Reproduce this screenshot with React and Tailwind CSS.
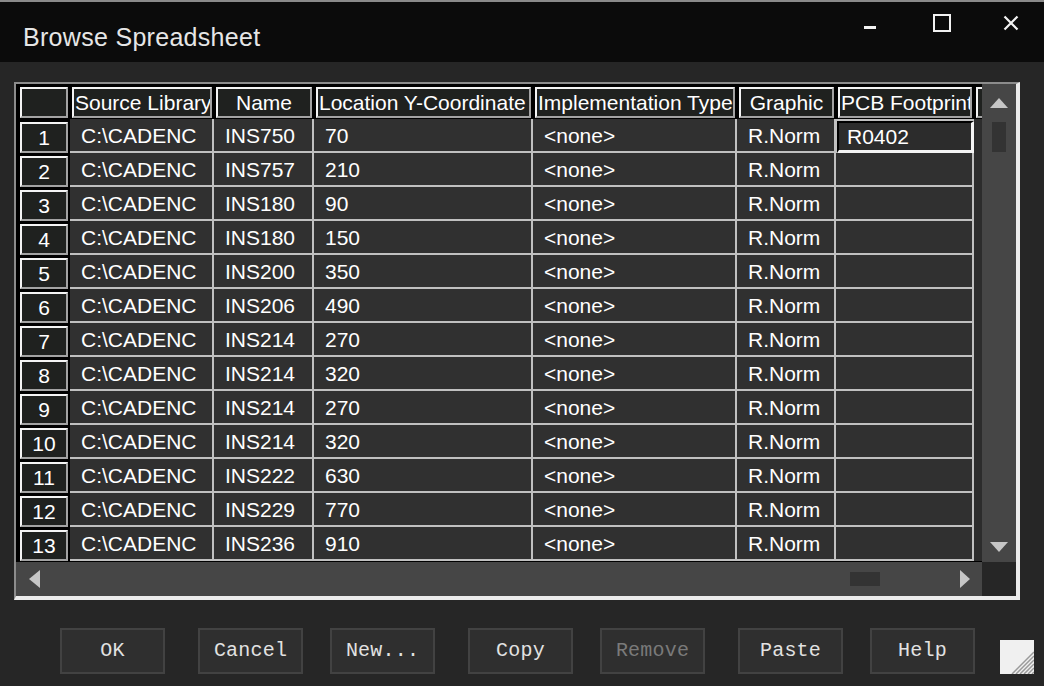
import React from 'react';

const cols = [
  { header: 'Source Library', cell: 'w-[144px]', center: false },
  { header: 'Name', cell: 'w-[100px]', center: true },
  { header: 'Location Y-Coordinate', cell: 'w-[219px]', center: false },
  { header: 'Implementation Type', cell: 'w-[204px]', center: false },
  { header: 'Graphic', cell: 'w-[99px]', center: true },
  { header: 'PCB Footprint', cell: 'w-[138px]', center: false },
];

const rows = [
  ['INS750', '70', 'R0402'],
  ['INS757', '210', ''],
  ['INS180', '90', ''],
  ['INS180', '150', ''],
  ['INS200', '350', ''],
  ['INS206', '490', ''],
  ['INS214', '270', ''],
  ['INS214', '320', ''],
  ['INS214', '270', ''],
  ['INS214', '320', ''],
  ['INS222', '630', ''],
  ['INS229', '770', ''],
  ['INS236', '910', ''],
];

const buttons = [
  { label: 'OK', extra: '' },
  { label: 'Cancel', extra: 'ml-[6px]' },
  { label: 'New...', extra: '' },
  { label: 'Copy', extra: 'ml-[6px]' },
  { label: 'Remove', extra: '', disabled: true },
  { label: 'Paste', extra: 'ml-[6px]' },
  { label: 'Help', extra: '' },
];

function Box({ children, className = '' }) {
  // raised 3d box used for the header and row-number cells
  return (
    <div
      className={
        'h-[31px] bg-[#1f211f] border-t-2 border-l-2 border-t-[#f4f4f4] border-l-[#f4f4f4] border-r-2 border-b-2 border-r-[#a3a3a3] border-b-[#a3a3a3] flex items-center overflow-hidden whitespace-nowrap ' +
        className
      }
    >
      {children}
    </div>
  );
}

function Cell({ className = '', children }) {
  return (
    <div
      className={
        'h-[34px] shrink-0 bg-[#303030] border-r-2 border-b-2 border-[#c0c0c0] flex items-center pl-[11px] whitespace-nowrap overflow-hidden ' +
        className
      }
    >
      {children}
    </div>
  );
}

export default function App() {
  return (
    <div
      className="w-[1044px] h-[686px] bg-[#262626] flex flex-col overflow-hidden text-white"
      style={{ fontFamily: '"Liberation Sans", Arial, sans-serif' }}
    >
      {/* title bar */}
      <div className="h-[62px] shrink-0 border-t-2 border-[#8a8a8a] bg-[#0b0b0b] flex">
        <div className="pl-[23px] pt-[11px] flex items-center text-[25px] tracking-[0.3px] text-[#e6e6e6]">
          Browse Spreadsheet
        </div>
        <div className="ml-auto flex h-[42px]">
          <div className="w-[73px] flex items-center justify-center">
            <svg width="18" height="18" viewBox="0 0 18 18">
              <rect x="3" y="12" width="12" height="3" fill="#f2f2f2" />
            </svg>
          </div>
          <div className="w-[72px] flex items-center justify-center">
            <svg width="18" height="18" viewBox="0 0 18 18">
              <rect x="1" y="1" width="16" height="16" fill="none" stroke="#f2f2f2" strokeWidth="2" />
            </svg>
          </div>
          <div className="w-[66px] flex items-center justify-center">
            <svg width="16" height="16" viewBox="0 0 16 16">
              <path d="M1.5 1.5 L14.5 14.5 M14.5 1.5 L1.5 14.5" stroke="#f2f2f2" strokeWidth="2.2" />
            </svg>
          </div>
        </div>
      </div>

      {/* spreadsheet frame */}
      <div className="mt-[20px] ml-[14px] w-[1006px] h-[518px] shrink-0 border-t-2 border-l-2 border-t-[#8c8c8c] border-l-[#8c8c8c] border-r-4 border-b-4 border-r-[#ececec] border-b-[#ececec] flex flex-col">
        <div className="h-[478px] flex">
          <div className="w-[966px] h-[478px] bg-black overflow-hidden text-[21px] leading-none">
            {/* header row */}
            <div className="h-[35px] flex">
              <div className="w-[54px] shrink-0 pl-[4px] pt-[3px]">
                <Box className="w-[48px]" />
              </div>
              {cols.map((c) => (
                <div key={c.header} className={'shrink-0 px-[2px] pt-[3px] ' + c.cell}>
                  <Box className={c.center ? 'justify-center' : 'pl-[1px]'}>{c.header}</Box>
                </div>
              ))}
              <div className="flex-1 pl-[2px] pt-[3px] overflow-hidden">
                <Box className="w-[40px]" />
              </div>
            </div>
            {/* data rows */}
            {rows.map((r, i) => (
              <div key={i} className="h-[34px] flex">
                <div className="w-[54px] shrink-0 pl-[4px] pt-[3px]">
                  <Box className="w-[48px] h-[30px] justify-center">{i + 1}</Box>
                </div>
                <Cell className="w-[144px]">C:\CADENC</Cell>
                <Cell className="w-[100px]">{r[0]}</Cell>
                <Cell className="w-[219px]">{r[1]}</Cell>
                <Cell className="w-[204px]">&lt;none&gt;</Cell>
                <Cell className="w-[99px]">R.Norm</Cell>
                {i === 0 ? (
                  <div className="w-[138px] h-[34px] shrink-0 bg-[#c0c0c0] pl-px pt-[2px]">
                    <div className="h-[32px] bg-[#2c2c2c] border-t-2 border-l-2 border-black border-r-[3px] border-b-[3px] border-r-[#f4f4f4] border-b-[#f4f4f4] flex items-center pl-[8px]">
                      {r[2]}
                    </div>
                  </div>
                ) : (
                  <Cell className="w-[138px]">{r[2]}</Cell>
                )}
                <div className="flex-1 h-[34px] bg-[#2c2c2c]" />
              </div>
            ))}
          </div>
          {/* vertical scrollbar */}
          <div className="w-[34px] h-[478px] bg-[#464646] flex flex-col items-center pt-[14px] pb-[10px]">
            <svg width="18" height="10" viewBox="0 0 18 10">
              <path d="M9 0 L18 10 L0 10 Z" fill="#c6c6c6" />
            </svg>
            <div className="mt-[14px] w-[14px] h-[30px] bg-[#333333]" />
            <div className="flex-1" />
            <svg width="18" height="10" viewBox="0 0 18 10">
              <path d="M0 0 L18 0 L9 10 Z" fill="#c6c6c6" />
            </svg>
          </div>
        </div>
        <div className="h-[34px] flex">
          {/* horizontal scrollbar */}
          <div className="w-[966px] h-[34px] bg-[#464646] flex items-center pl-[13px] pr-[12px]">
            <svg width="11" height="18" viewBox="0 0 11 18">
              <path d="M11 0 L11 18 L0 9 Z" fill="#c6c6c6" />
            </svg>
            <div className="flex-1" />
            <div className="w-[30px] h-[14px] bg-[#333333]" />
            <div className="w-[80px]" />
            <svg width="10" height="18" viewBox="0 0 10 18">
              <path d="M0 0 L10 9 L0 18 Z" fill="#c6c6c6" />
            </svg>
          </div>
          <div className="w-[34px] h-[34px] bg-[#262626]" />
        </div>
      </div>

      {/* buttons */}
      <div
        className="mt-[28px] h-[46px] pl-[60px] flex gap-[27px]"
        style={{ fontFamily: '"Liberation Mono", "Courier New", monospace' }}
      >
        {buttons.map((b) => (
          <div
            key={b.label}
            className={
              'w-[105px] h-[46px] shrink-0 border-2 border-[#424242] bg-[#2f2f2f] flex items-center justify-center text-[20px] tracking-[0.2px] ' +
              b.extra +
              ' ' +
              (b.disabled ? 'text-[#7a7a7a]' : 'text-[#e2e2e2]')
            }
          >
            {b.label}
          </div>
        ))}
        <div className="self-end ml-[-2px] w-[34px] h-[34px] shrink-0 bg-[#f0f0f0]">
          <svg width="34" height="34" viewBox="0 0 34 34">
            <path
              d="M34 12 L12 34 M34 16 L16 34 M34 20 L20 34 M34 24 L24 34 M34 28 L28 34 M34 32 L32 34"
              stroke="#9a9a9a"
              strokeWidth="1.5"
            />
          </svg>
        </div>
      </div>
    </div>
  );
}
